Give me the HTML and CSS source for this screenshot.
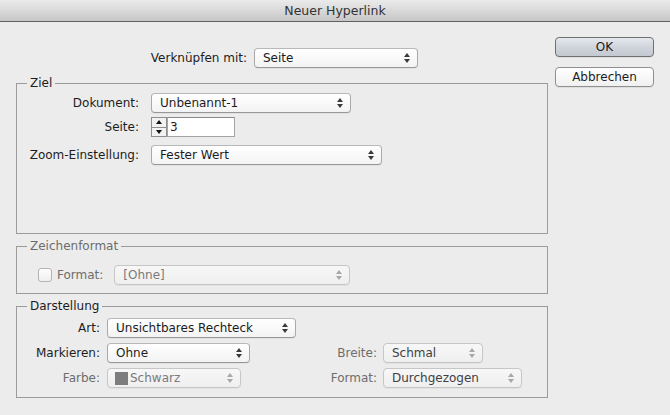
FILE: index.html
```html
<!DOCTYPE html>
<html><head><meta charset="utf-8"/>
<link rel="stylesheet" href="styles.css">
<title>Neuer Hyperlink</title></head>
<body>
<div class="titlebar">Neuer Hyperlink</div>
<div class="dialog">
 <div class="main">
  <div class="link-row">
   <span class="link-lbl">Verknüpfen mit:</span>
   <div class="popup w164"><span>Seite</span><i class="arrows"></i></div>
  </div>

  <fieldset class="group ziel">
   <legend>Ziel</legend>
   <div class="row first">
    <label class="lbl-ziel">Dokument:</label>
    <div class="popup w200"><span>Unbenannt-1</span><i class="arrows"></i></div>
   </div>
   <div class="row">
    <label class="lbl-ziel">Seite:</label>
    <div class="stepper"><b class="up"></b><b class="down"></b></div>
    <div class="field">3</div>
   </div>
   <div class="row gap8">
    <label class="lbl-ziel">Zoom-Einstellung:</label>
    <div class="popup w231"><span>Fester Wert</span><i class="arrows"></i></div>
   </div>
  </fieldset>

  <fieldset class="group zeichen off">
   <legend>Zeichenformat</legend>
   <div class="row chk-row">
    <span class="checkbox"></span>
    <label class="lbl-chk">Format:</label>
    <div class="popup dis w236"><span>[Ohne]</span><i class="arrows"></i></div>
   </div>
  </fieldset>

  <fieldset class="group darst">
   <legend>Darstellung</legend>
   <div class="row first">
    <label class="lbl-d">Art:</label>
    <div class="popup w189"><span>Unsichtbares Rechteck</span><i class="arrows"></i></div>
   </div>
   <div class="row gap5">
    <div class="half">
     <label class="lbl-d">Markieren:</label>
     <div class="popup w143"><span>Ohne</span><i class="arrows"></i></div>
    </div>
    <label class="lbl-r off">Breite:</label>
    <div class="popup dis soft w100"><span>Schmal</span><i class="arrows"></i></div>
   </div>
   <div class="row gap5">
    <div class="half">
     <label class="lbl-d off">Farbe:</label>
     <div class="popup dis w134"><span class="swatch"></span><span>Schwarz</span><i class="arrows"></i></div>
    </div>
    <label class="lbl-r off">Format:</label>
    <div class="popup dis soft w139"><span>Durchgezogen</span><i class="arrows"></i></div>
   </div>
  </fieldset>
 </div>

 <div class="side">
  <div class="btn default">OK</div>
  <div class="btn">Abbrechen</div>
 </div>
</div>
</body></html>
```

FILE: styles.css
```css
*{ padding:0; margin:0; box-sizing:border-box; }
body{ background:#ececec; font-family:"DejaVu Sans", sans-serif; font-size:12px; color:#1c1c1c; width:670px; height:415px; overflow:hidden; }

.titlebar{ height:22px; line-height:21px; text-align:center; font-size:12.5px; color:#333;
 background:linear-gradient(#ebebeb, #d9d9d9 50%, #c6c6c6); border-bottom:1px solid #616161; }

.dialog{ display:flex; padding:0 0 0 16px; }
.main{ width:532px; }
.side{ width:99px; margin-left:7px; padding-top:15px; display:flex; flex-direction:column; gap:10px; }

.link-row{ display:flex; align-items:center; height:20px; margin-top:26px; }
.link-lbl{ width:231px; text-align:right; margin-right:7px; }

/* popup buttons */
.popup{ display:flex; align-items:center; height:20px; padding:0 7px 0 8px; border:1px solid #a9a9a9; border-top-color:#b8b8b8; border-bottom-color:#979797;
 border-radius:4px; background:linear-gradient(#ffffff, #f3f3f3); box-shadow:0 1px 0 rgba(0,0,0,0.04); white-space:nowrap; }
.popup.dis{ color:#7a7a7a; border-color:#c6c6c6; background:linear-gradient(#f7f7f7, #efefef); }
.popup.soft{ color:#3f3f3f; }
.arrows{ margin-left:auto; display:flex; flex-direction:column; gap:2px; }
.arrows:before, .arrows:after{ content:""; display:block; border-left:3px solid transparent; border-right:3px solid transparent; }
.arrows:before{ border-bottom:4px solid #3a3a3a; }
.arrows:after{ border-top:4px solid #3a3a3a; }
.dis .arrows:before{ border-bottom-color:#a8a8a8; }
.dis .arrows:after{ border-top-color:#a8a8a8; }
.swatch{ width:13px; height:13px; background:#7d7d7d; margin:0 2px 0 -1px; }

.w100{ width:100px; } .w134{ width:134px; } .w139{ width:139px; } .w143{ width:143px; }
.w164{ width:164px; } .w189{ width:189px; } .w200{ width:200px; } .w231{ width:231px; } .w236{ width:236px; }

/* groups */
.group{ border:1px solid #9b9b9b; padding:0; margin:0; }
.group legend{ margin-left:10px; padding:0 3px; line-height:15px; }
.ziel{ margin-top:8px; padding:2px 0 68px; }
.zeichen{ margin-top:5px; padding:0 0 8px; }
.darst{ margin-top:5px; padding:4px 0 9px; }
.off, .off legend{ color:#6d6d6d; }

.row{ display:flex; align-items:center; height:20px; margin-top:4px; }
.row.first{ margin-top:0; }
.row.gap8{ margin-top:8px; }
.row.gap5{ margin-top:5px; }
.lbl-ziel{ width:122px; text-align:right; margin-right:12px; }
.lbl-d{ width:83px; text-align:right; margin-right:7px; }
.half{ display:flex; align-items:center; width:260px; }
.lbl-r{ width:100px; text-align:right; margin-right:6px; }

.chk-row{ margin-top:11px; }
.checkbox{ width:14px; height:14px; margin-left:21px; margin-right:5px; border:1px solid #b4b4b4; border-radius:3px; background:linear-gradient(#fdfdfd, #f0f0f0); }
.lbl-chk{ margin-right:11px; }

/* stepper + field */
.stepper{ width:16px; height:20px; display:flex; flex-direction:column; border:1px solid #8e8e8e; background:#f2f2f2; }
.stepper b{ flex:1; display:flex; align-items:center; justify-content:center; }
.stepper b.up{ border-bottom:1px solid #8e8e8e; }
.stepper b.up:after{ content:""; border-left:3px solid transparent; border-right:3px solid transparent; border-bottom:4px solid #111; }
.stepper b.down:after{ content:""; border-left:3px solid transparent; border-right:3px solid transparent; border-top:4px solid #111; }
.field{ width:68px; height:20px; line-height:18px; padding-left:2px; border:1px solid #a4a4a4; border-top-color:#8a8a8a; background:#fff; }

/* push buttons */
.btn{ height:20px; line-height:18px; text-align:center; border:1px solid #8f8f8f; border-radius:4px; background:linear-gradient(#ffffff, #f0f0f0); box-shadow:0 1px 0 rgba(0,0,0,0.06); }
.btn.default{ border-color:#6f6f6f; background:linear-gradient(#e6e9ed, #d0d5dc 50%, #c3c9d1); }
```
